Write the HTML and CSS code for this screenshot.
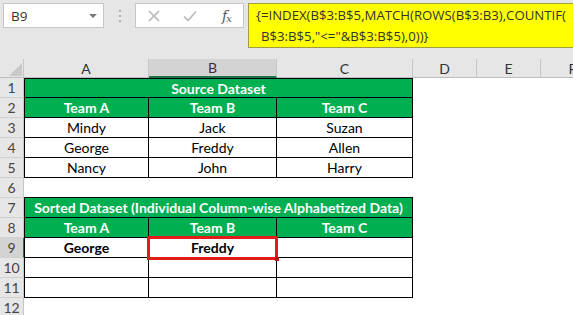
FILE: index.html
```html
<!DOCTYPE html>
<html>
<head>
<meta charset="utf-8">
<link rel="stylesheet" href="styles.css">
</head>
<body>
<div class="app">
  <div class="fbar">
    <div class="namebox"><span class="nb-text">B9</span><span class="nb-arrow"></span></div>
    <div class="dots"><i></i><i></i><i></i></div>
    <div class="fxbox">
      <svg class="ic" width="14" height="14" viewBox="0 0 14 14"><path d="M2 2 L12 12 M12 2 L2 12" stroke="#b8b8b8" stroke-width="1.6" fill="none"/></svg>
      <svg class="ic" width="16" height="14" viewBox="0 0 16 14"><path d="M2 7.5 L6 11.5 L14 2.5" stroke="#b8b8b8" stroke-width="1.6" fill="none"/></svg>
      <span class="fx">f<sub>x</sub></span>
    </div>
    <div class="formula">{=INDEX(B$3:B$5,MATCH(ROWS(B$3:B3),COUNTIF(<br><span class="indent">B$3:B$5,"&lt;="&amp;B$3:B$5),0))}</span></div>
  </div>
  <div class="sheet">
    <div class="corner"><svg width="24" height="19" viewBox="0 0 24 19"><polygon points="22,4 22,17 9,17" fill="#c9c9c9"/></svg></div>
    <div class="ch">A</div>
    <div class="ch sel">B</div>
    <div class="ch">C</div>
    <div class="ch">D</div>
    <div class="ch">E</div>
    <div class="ch">F</div>

    <div class="rh">1</div>
    <div class="c span3 g top-b">Source Dataset</div>
    <div class="c"></div><div class="c"></div><div class="c"></div>

    <div class="rh">2</div>
    <div class="c t g first">Team A</div>
    <div class="c t g">Team B</div>
    <div class="c t g">Team C</div>
    <div class="c"></div><div class="c"></div><div class="c"></div>

    <div class="rh">3</div>
    <div class="c t first">Mindy</div>
    <div class="c t">Jack</div>
    <div class="c t">Suzan</div>
    <div class="c"></div><div class="c"></div><div class="c"></div>

    <div class="rh">4</div>
    <div class="c t first">George</div>
    <div class="c t">Freddy</div>
    <div class="c t">Allen</div>
    <div class="c"></div><div class="c"></div><div class="c"></div>

    <div class="rh">5</div>
    <div class="c t first">Nancy</div>
    <div class="c t">John</div>
    <div class="c t">Harry</div>
    <div class="c"></div><div class="c"></div><div class="c"></div>

    <div class="rh">6</div>
    <div class="c bb"></div>
    <div class="c bb"></div>
    <div class="c bb"></div>
    <div class="c"></div><div class="c"></div><div class="c"></div>

    <div class="rh">7</div>
    <div class="c span3 g">Sorted Dataset (Individual Column-wise Alphabetized Data)</div>
    <div class="c"></div><div class="c"></div><div class="c"></div>

    <div class="rh">8</div>
    <div class="c t g first">Team A</div>
    <div class="c t g">Team B</div>
    <div class="c t g">Team C</div>
    <div class="c"></div><div class="c"></div><div class="c"></div>

    <div class="rh sel">9</div>
    <div class="c t first b">George</div>
    <div class="c t b active">Freddy<span class="mark"></span></div>
    <div class="c t"></div>
    <div class="c"></div><div class="c"></div><div class="c"></div>

    <div class="rh">10</div>
    <div class="c t first"></div>
    <div class="c t"></div>
    <div class="c t"></div>
    <div class="c"></div><div class="c"></div><div class="c"></div>

    <div class="rh">11</div>
    <div class="c t first"></div>
    <div class="c t"></div>
    <div class="c t"></div>
    <div class="c"></div><div class="c"></div><div class="c"></div>

    <div class="rh">12</div>
    <div class="c"></div><div class="c"></div><div class="c"></div>
    <div class="c"></div><div class="c"></div><div class="c"></div>
  </div>
</div>
</body>
</html>
```

FILE: styles.css
```css
* { box-sizing: border-box; }
html, body { margin: 0; padding: 0; background: #ffffff; }
body { width: 573px; height: 315px; overflow: hidden; font-family: Lato, "Open Sans", sans-serif; }

.app { display: flex; flex-direction: column; width: 573px; overflow: hidden; }

.fbar {
  height: 59px;
  background: #e6e6e6;
  display: flex;
  align-items: flex-start;
  padding: 3px 0 0 3px;
}
.namebox {
  width: 101px; height: 25px;
  background: #fff;
  border: 1px solid #c6c6c6;
  display: flex; align-items: center; justify-content: space-between;
  padding: 0 6px 0 7px;
  font-family: "Open Sans", sans-serif; font-size: 13.5px; color: #333;
}
.nb-arrow {
  width: 0; height: 0;
  border-left: 4px solid transparent; border-right: 4px solid transparent;
  border-top: 4px solid #777;
}
.dots {
  width: 31px; height: 25px;
  display: flex; flex-direction: column; align-items: center; justify-content: center; gap: 3px;
}
.dots i { display: block; width: 2px; height: 2px; background: #b0b0b0; }
.fxbox {
  width: 109px; height: 25px;
  background: #fff;
  border: 1px solid #c6c6c6;
  display: flex; align-items: center;
  padding: 0 0 0 11px; gap: 21px;
}
.ic { display: block; }
.fx { font-family: "DejaVu Serif", "Liberation Serif", serif; font-style: italic; font-size: 14px; color: #555; letter-spacing: -1px; margin-left: 3px; }
.fx sub { font-size: 10px; vertical-align: -1px; }
.formula {
  margin-left: 4px;
  flex: 1;
  height: 45px;
  background: #ffff00;
  border: 1px solid #9e9e40;
  border-right: none;
  padding: 1px 0 0 7px;
  font-family: "Open Sans", sans-serif; font-size: 13.2px; line-height: 21px; color: #333;
  white-space: nowrap; overflow: hidden;
}
.indent { padding-left: 5px; }

.sheet {
  display: grid;
  grid-template-columns: 24px 125px 128px 136px 64px 64px 64px;
  grid-template-rows: 19px repeat(12, 20px);
  font-size: 14px;
  color: #000;
}
.corner { background: #e6e6e6; border-right: 1px solid #c6c6c6; border-bottom: 1px solid #bdbdbd; }
.corner svg { display: block; }
.ch {
  background: #e6e6e6;
  border-right: 1px solid #c6c6c6; border-bottom: 1px solid #bdbdbd;
  display: flex; align-items: center; justify-content: center;
  color: #333; font-size: 14px;
}
.ch.sel { background: #d3d3d3; border-bottom: 2px solid #217346; }
.rh {
  background: #e6e6e6;
  border-right: 1px solid #c6c6c6; border-bottom: 1px solid #d0d0d0;
  display: flex; align-items: center; justify-content: center;
  color: #444; font-size: 14px;
}
.rh.sel { background: #d3d3d3; border-right: 1px solid #217346; }
.c {
  display: flex; align-items: center; justify-content: center;
  white-space: nowrap;
}
.span3 { grid-column: span 3; border-right: 1px solid #000; border-bottom: 1px solid #000; border-left: 1px solid #000; }
.top-b { border-top: 1px solid #000; }
.g { background: #00b050; color: #fff; font-weight: 700; }
.t { border-right: 1px solid #000; border-bottom: 1px solid #000; }
.first { border-left: 1px solid #000; }
.bb { border-bottom: 1px solid #000; }
.b { font-weight: 700; }
.active { position: relative; }
.active::after {
  content: "";
  position: absolute;
  left: -2px; top: -2px; right: -2px; bottom: -3px;
  border: 3px solid #e21b1b;
}
.mark {
  position: absolute; right: -3px; bottom: -4px;
  width: 4px; height: 4px; background: #c01010; z-index: 2;
}
```
